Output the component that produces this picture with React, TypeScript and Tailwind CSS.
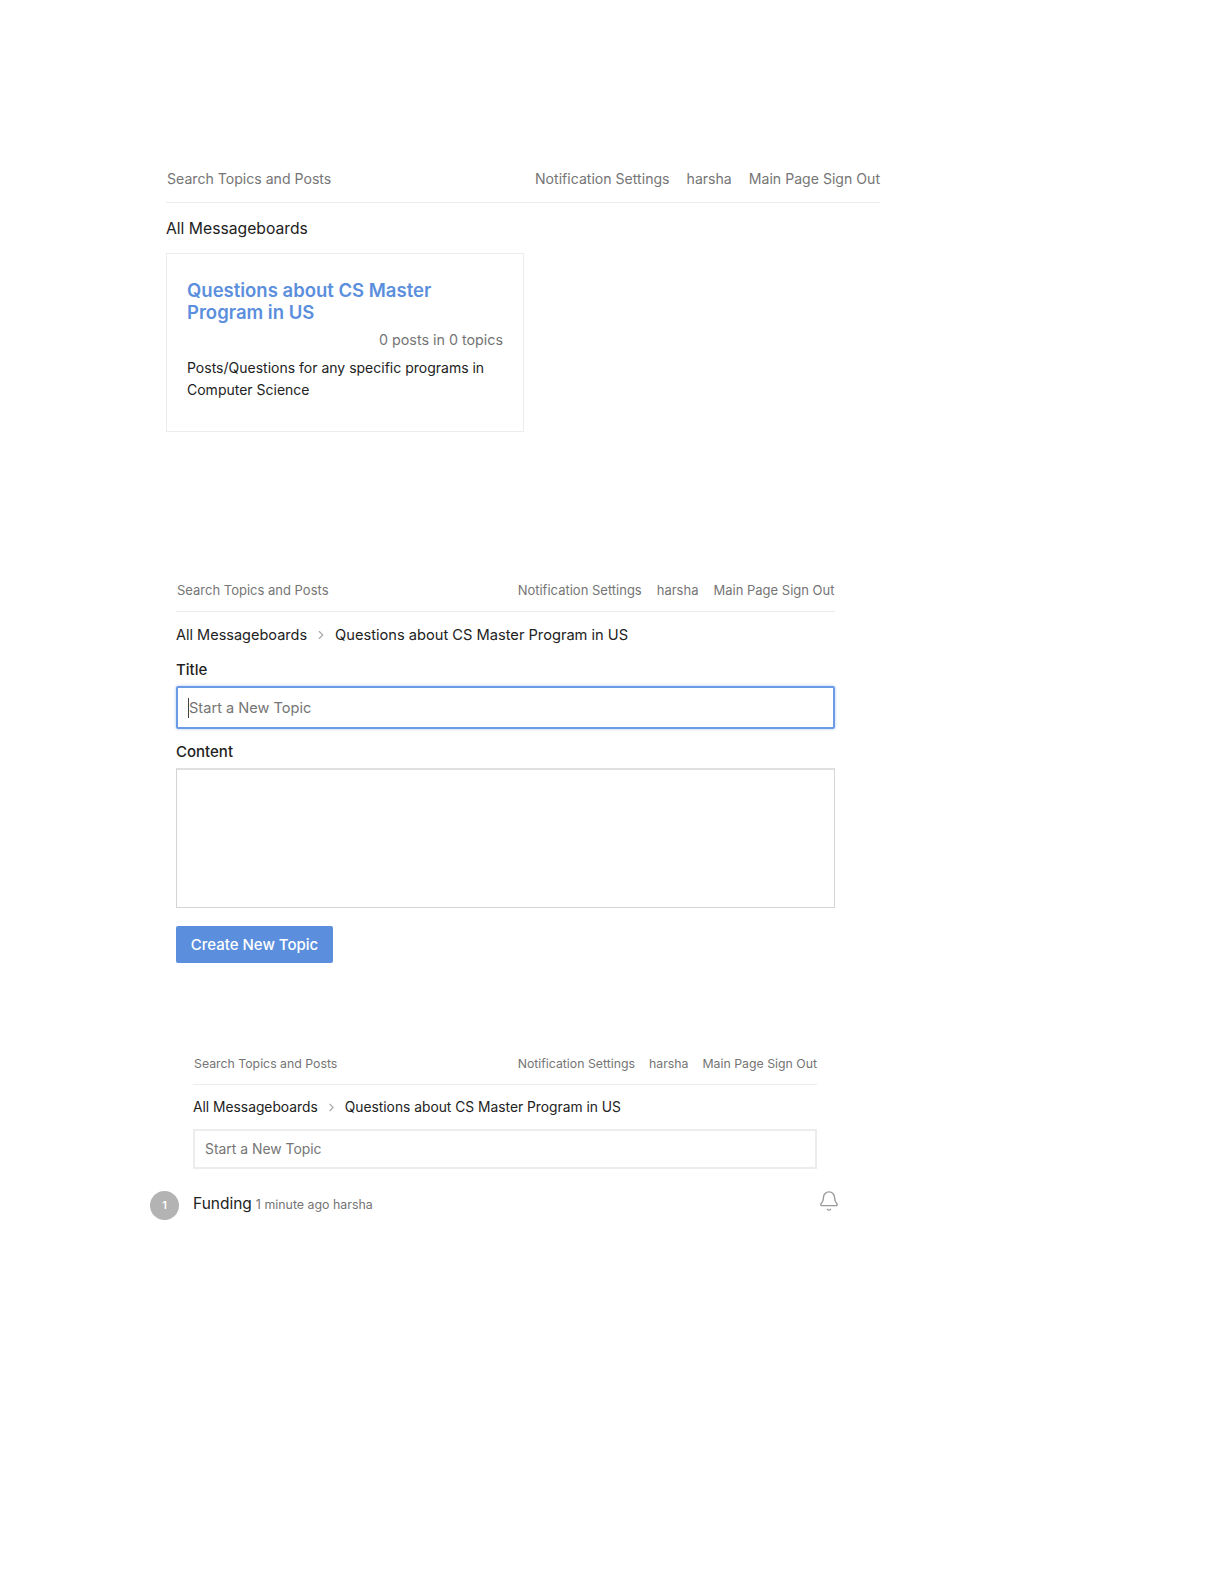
import { ChevronRight, Bell } from 'lucide-react';

type NavProps = { textClass: string; gapClass: string; rowClass: string };

const TopNav = ({ textClass, gapClass, rowClass }: NavProps) => {
  return (
    <div className={`flex justify-between items-center border-b border-[#ececec] text-[#757575] ${textClass} ${rowClass}`}>
      <span className="pl-[1px]">Search Topics and Posts</span>
      <div className={`flex ${gapClass}`}>
        <span>Notification Settings</span>
        <span>harsha</span>
        <span>Main Page Sign Out</span>
      </div>
    </div>
  );
};

const App = () => {
  return (
    <div className="w-full h-[1584px] bg-white text-[#222] font-['Inter','Noto_Sans',sans-serif] overflow-hidden">
      {/* board list */}
      <section className="ml-[166px] w-[714px] pt-[168px]">
        <TopNav textClass="text-[14.1px]" gapClass="gap-[17px]" rowClass="h-[35px] pb-[12px]" />
        <h2 className="mt-[16px] text-[15.7px] leading-[20px]">All Messageboards</h2>
        <div className="mt-[14px] w-[358px] h-[179px] border border-[#ececec] px-[20px] pt-[25px]">
          <h3 className="text-[18.5px] leading-[22px] font-semibold text-[#5b8fdd]">
            Questions about CS Master Program in US
          </h3>
          <div className="mt-[7px] text-right text-[14.3px] leading-[20px] text-[#757575]">0 posts in 0 topics</div>
          <p className="mt-[7px] text-[14px] leading-[22px]">
            Posts/Questions for any specific programs in Computer Science
          </p>
        </div>
      </section>

      {/* new topic form */}
      <section className="ml-[176px] w-[658.5px] mt-[149px]">
        <TopNav textClass="text-[13px]" gapClass="gap-[15px]" rowClass="h-[31px] pb-[11px]" />
        <div className="mt-[13px] flex items-center text-[14.5px] leading-[20px]">
          <span>All Messageboards</span>
          <ChevronRight className="w-[14px] h-[14px] mx-[7px] text-[#aaa]" />
          <span className="text-[14.65px]">Questions about CS Master Program in US</span>
        </div>
        <label className="block mt-[15px] text-[15px] leading-[20px] font-medium">Title</label>
        <div className="mt-[6px] h-[43px] border-2 border-[#6a9be4] rounded-[2px] shadow-[0_0_3px_#a9c6f0] flex items-center pl-[10px] text-[14.6px] text-[#757575]">
          <span className="border-l border-[#444] leading-[20px]">Start a New Topic</span>
        </div>
        <label className="block mt-[13px] text-[15px] leading-[20px] font-medium">Content</label>
        <div className="mt-[6px] h-[140px] border border-[#d4d4d4] border-t-2 border-t-[#e0e0e0]"></div>
        <button className="mt-[18px] w-[157px] h-[37px] pt-[1px] rounded-[2px] bg-[#5b8fdd] text-white text-[15px] font-medium">
          Create New Topic
        </button>
      </section>

      {/* topic list */}
      <section className="mt-[92px]">
        <div className="ml-[193px] w-[624px]">
          <TopNav textClass="text-[12.3px]" gapClass="gap-[14px]" rowClass="h-[30px] pb-[10px]" />
          <div className="mt-[12px] flex items-center text-[13.8px] leading-[20px]">
            <span>All Messageboards</span>
            <ChevronRight className="w-[13px] h-[13px] mx-[7px] text-[#aaa]" />
            <span>Questions about CS Master Program in US</span>
          </div>
          <div className="mt-[12px] h-[40px] border-2 border-[#ececec] flex items-center pl-[10px] text-[13.9px] text-[#757575]">
            Start a New Topic
          </div>
        </div>
        <div className="ml-[150px] w-[690px] mt-[21px] flex items-center">
          <div className="w-[29px] h-[29px] rounded-full bg-[#b3b3b3] text-white text-[11px] font-semibold flex items-center justify-center">1</div>
          <span className="ml-[14px] mb-[3px] text-[15.5px] text-[#222]">Funding</span>
          <span className="ml-[4px] text-[12.4px] text-[#757575]">1 minute ago harsha</span>
          <Bell strokeWidth={1.5} className="ml-auto mb-[8px] w-[22px] h-[22px] text-[#999]" />
        </div>
      </section>
    </div>
  );
};

export default App;
